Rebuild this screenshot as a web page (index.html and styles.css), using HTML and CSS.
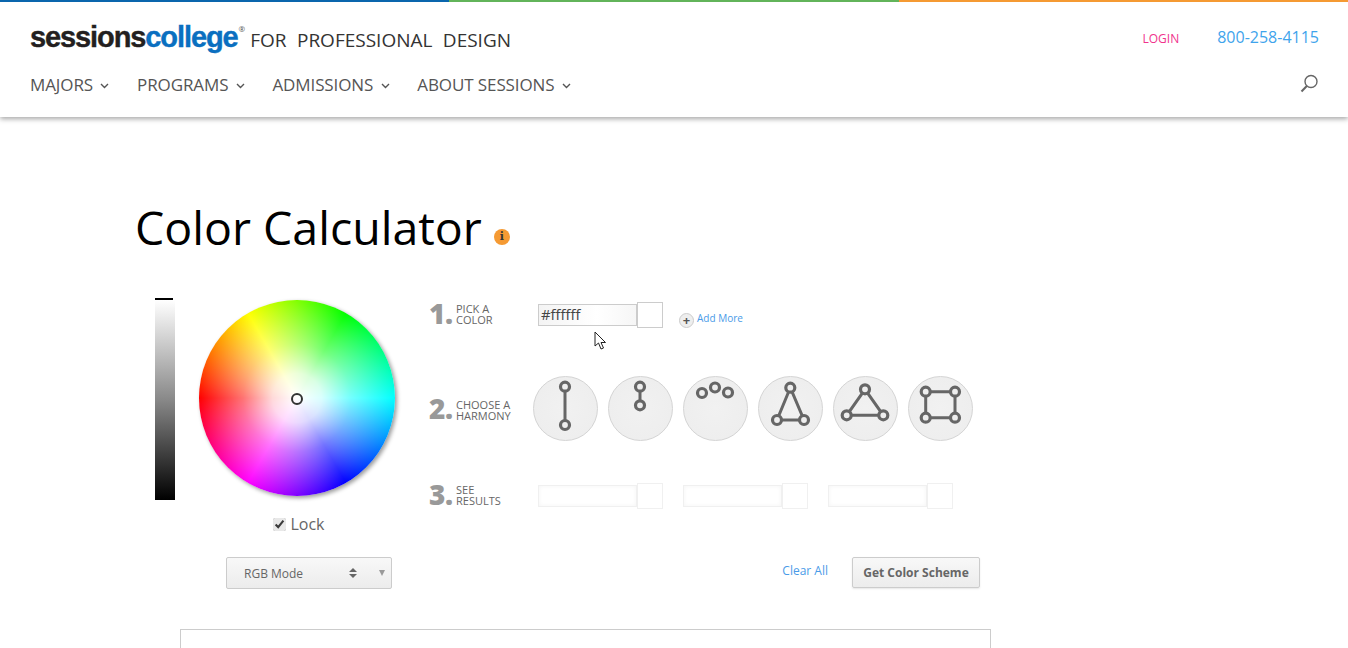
FILE: index.html
```html
<!DOCTYPE html>
<html lang="en">
<head>
    <meta charset="UTF-8">
    <title>Color Calculator - Sessions College</title>
    <link rel="stylesheet" href="styles.css">
</head>
<body>

<div class="stripe">
    <span class="stripe-blue"></span>
    <span class="stripe-green"></span>
    <span class="stripe-orange"></span>
</div>

<header class="header">
    <div class="header-top">
        <a class="logo" href="#">
            <span class="logo-dark">sessions</span><span class="logo-blue">college</span><sup class="logo-reg">®</sup>
            <span class="logo-tag">FOR PROFESSIONAL DESIGN</span>
        </a>
        <div class="contact">
            <a class="login" href="#">LOGIN</a>
            <a class="phone" href="#">800-258-4115</a>
        </div>
    </div>
    <div class="header-bottom">
        <nav class="nav">
            <a href="#">MAJORS <svg class="chev" viewBox="0 0 9 6"><path d="M1 1l3.5 3.5L8 1"/></svg></a>
            <a href="#">PROGRAMS <svg class="chev" viewBox="0 0 9 6"><path d="M1 1l3.5 3.5L8 1"/></svg></a>
            <a href="#">ADMISSIONS <svg class="chev" viewBox="0 0 9 6"><path d="M1 1l3.5 3.5L8 1"/></svg></a>
            <a href="#">ABOUT SESSIONS <svg class="chev" viewBox="0 0 9 6"><path d="M1 1l3.5 3.5L8 1"/></svg></a>
        </nav>
        <svg class="search" viewBox="0 0 20 20"><circle cx="12" cy="7.500" r="6"/><path class="search-handle" d="M7.800 12L2.500 17.500"/></svg>
    </div>
</header>

<main class="main">
    <h1 class="title">Color Calculator <span class="info">i</span></h1>

    <div class="calc">
        <!-- rueda y brillo -->
        <div class="picker">
            <div class="slider"><span class="slider-handle"></span></div>
            <div class="wheel-col">
                <div class="wheel"><span class="wheel-marker"></span></div>
                <label class="lock"><input type="checkbox" checked> Lock</label>
                <div class="mode">
                    <span>RGB Mode</span>
                    <span class="mode-updown"></span>
                    <span class="mode-arrow"></span>
                </div>
            </div>
        </div>

        <div class="steps">
            <div class="step step-pick">
                <div class="step-label"><b>1.</b><span>PICK A<br>COLOR</span></div>
                <div class="color-field">
                    <input class="color-input" type="text" value="#ffffff">
                    <span class="swatch"></span>
                </div>
                <a class="add-more" href="#"><span class="add-icon">+</span>Add More</a>
                <svg class="cursor" viewBox="0 0 14 20"><path d="M1 1v14l3.500-3 2.500 6 2.500-1-2.500-5.500h4.500z"/></svg>
            </div>

            <div class="step step-harmony">
                <div class="step-label"><b>2.</b><span>CHOOSE A<br>HARMONY</span></div>
                <div class="harmonies">
                    <button class="harmony"><svg viewBox="1 1 63 63"><path d="M32 10.700V49"/><circle cx="32" cy="10.700" r="4.500"/><circle cx="32" cy="49" r="4.500"/></svg></button>
                    <button class="harmony"><svg viewBox="1 1 63 63"><path d="M32 10.700V29.300"/><circle cx="32" cy="10.700" r="4.500"/><circle cx="32" cy="29.300" r="4.500"/></svg></button>
                    <button class="harmony"><svg viewBox="1 1 63 63"><circle cx="19" cy="17" r="4.500"/><circle cx="32" cy="11.500" r="4.500"/><circle cx="45" cy="16.500" r="4.500"/></svg></button>
                    <button class="harmony"><svg viewBox="1 1 63 63"><path d="M32.300 11.700L19 44H46z"/><circle cx="32.300" cy="11.700" r="4.500"/><circle cx="19" cy="44" r="4.500"/><circle cx="46" cy="44" r="4.500"/></svg></button>
                    <button class="harmony"><svg viewBox="1 1 63 63"><path d="M32 13.300L13.700 39.300H50.300z"/><circle cx="32" cy="13.300" r="4.500"/><circle cx="13.700" cy="39.300" r="4.500"/><circle cx="50.300" cy="39.300" r="4.500"/></svg></button>
                    <button class="harmony"><svg viewBox="1 1 63 63"><path d="M17.700 15.700H47V41.700H17.700z"/><circle cx="17.700" cy="15.700" r="4.500"/><circle cx="47" cy="15.700" r="4.500"/><circle cx="17.700" cy="41.700" r="4.500"/><circle cx="47" cy="41.700" r="4.500"/></svg></button>
                </div>
            </div>

            <div class="step step-results">
                <div class="step-label"><b>3.</b><span>SEE<br>RESULTS</span></div>
                <div class="results">
                    <div class="color-field is-empty"><span class="color-input"></span><span class="swatch"></span></div>
                    <div class="color-field is-empty"><span class="color-input"></span><span class="swatch"></span></div>
                    <div class="color-field is-empty"><span class="color-input"></span><span class="swatch"></span></div>
                </div>
            </div>

            <div class="actions">
                <a class="clear" href="#">Clear All</a>
                <button class="get-scheme">Get Color Scheme</button>
            </div>
        </div>
    </div>

    <div class="output"></div>
</main>

</body>
</html>
```

FILE: styles.css
```css
html {
    overflow: hidden;
    height: 100%;
}
body {
    margin: 0;
    height: 100%;
    overflow: hidden;
    background-color: #fff;
    font-family: "Open Sans", Arial, sans-serif;
    color: #555;
}
a {
    text-decoration: none;
}

/* franja de arriba */
.stripe {
    display: flex;
    height: 2px;
}
.stripe span {
    flex: 1;
}
.stripe-blue {
    background-color: #0a66ad;
}
.stripe-green {
    background-color: #62b45a;
}
.stripe-orange {
    background-color: #f59a33;
}

/* cabecera */
.header {
    height: 115px;
    padding: 0 29px 0 30px;
    box-shadow: 0 2px 5px rgba(0, 0, 0, 0.35);
    box-sizing: border-box;
}
.header-top {
    display: flex;
    justify-content: space-between;
    align-items: flex-start;
    height: 69px;
    padding-top: 20px;
    box-sizing: border-box;
}
.logo {
    display: flex;
    align-items: baseline;
    line-height: 30px;
    height: 30px;
}
.logo-dark,
.logo-blue {
    font-family: "Liberation Sans", Arial, sans-serif;
    font-weight: bold;
    font-size: 29px;
    letter-spacing: -1.100px;
    -webkit-text-stroke: 0.4px;
}
.logo-dark {
    color: #231f20;
}
.logo-blue {
    color: #0a6fc0;
}
.logo-reg {
    font-size: 8px;
    line-height: 8px;
    color: #555;
    align-self: flex-start;
    margin: 3px 0 0 1px;
}
.logo-tag {
    margin-top: -2px;
    margin-left: 5px;
    font-size: 19px;
    line-height: 28px;
    color: #333;
    word-spacing: 5.500px;
}
.contact {
    display: flex;
    align-items: baseline;
    gap: 38px;
    margin-top: 4px;
}
.login {
    font-size: 12px;
    color: #f0348c;
}
.phone {
    font-size: 16px;
    color: #3fa4ec;
}
.header-bottom {
    display: flex;
    justify-content: space-between;
    align-items: center;
    height: 26px;
}
.nav {
    display: flex;
    gap: 27.700px;
}
.nav a {
    font-size: 17px;
    color: #555;
    letter-spacing: -0.100px;
}
.chev {
    width: 9px;
    height: 6px;
    margin-left: 3px;
    vertical-align: 2px;
    fill: none;
    stroke: #555;
    stroke-width: 1.400;
}
.search {
    width: 20px;
    height: 20px;
    margin-top: -1px;
    fill: none;
    stroke: #666;
    stroke-width: 1.400;
}
.search-handle {
    stroke-width: 2;
}

/* calculadora */
.main {
    padding: 80px 0 0 135px;
}
.title {
    margin: 0 0 41px;
    height: 60px;
    font-size: 46.500px;
    line-height: 60px;
    font-weight: normal;
    color: #000;
}
.info {
    display: inline-block;
    width: 16px;
    height: 16px;
    margin-left: 0;
    border-radius: 50%;
    background-color: #f59a33;
    color: #333;
    font-family: "DejaVu Serif", serif;
    font-size: 11px;
    font-weight: bold;
    line-height: 16px;
    text-align: center;
    vertical-align: 5px;
}
.calc {
    display: flex;
    margin-left: 1px;
}
.picker {
    display: flex;
    width: 293px;
    padding-left: 19px;
    box-sizing: border-box;
}
.slider {
    position: relative;
    width: 20px;
    height: 200px;
    margin-top: 2px;
    background: linear-gradient(#fff, #888 50%, #000);
}
.slider-handle {
    position: absolute;
    top: -2px;
    left: 0;
    width: 18px;
    height: 2px;
    background-color: #000;
}
.wheel-col {
    margin-left: 24px;
    padding-top: 2px;
}
.wheel {
    position: relative;
    width: 196px;
    height: 196px;
    border-radius: 50%;
    background:
        radial-gradient(circle closest-side, #fff 0, rgba(255, 255, 255, 0.85) 25%, rgba(255, 255, 255, 0.45) 55%, rgba(255, 255, 255, 0) 100%),
        conic-gradient(#80ff00, #00ff00 30deg, #00ffff 90deg, #0000ff 150deg, #ff00ff 210deg, #ff0000 270deg, #ffff00 330deg, #80ff00);
    box-shadow: 2px 2px 4px rgba(0, 0, 0, 0.4);
}
.wheel-marker {
    position: absolute;
    top: 93px;
    left: 92px;
    width: 8px;
    height: 8px;
    border: 2px solid #333;
    border-radius: 50%;
}
.lock {
    display: flex;
    align-items: center;
    justify-content: center;
    gap: 4px;
    height: 20px;
    margin: 18px 0 0 4px;
    font-size: 16px;
    color: #666;
}
.lock input {
    width: 13px;
    height: 13px;
    margin: 0;
    accent-color: #e8e8e8;
}
.mode {
    display: flex;
    align-items: center;
    width: 166px;
    height: 32px;
    margin: 23px 0 0 27px;
    padding: 0 6px 0 17px;
    box-sizing: border-box;
    border: 1px solid #ccc;
    border-radius: 2px;
    background: linear-gradient(#f8f8f8, #ececec);
    font-size: 12px;
    color: #666;
}
.mode-updown {
    position: relative;
    width: 8px;
    height: 10px;
    margin-left: 46px;
}
.mode-updown::before,
.mode-updown::after {
    content: "";
    position: absolute;
    left: 0;
    border-left: 4px solid transparent;
    border-right: 4px solid transparent;
}
.mode-updown::before {
    top: 0;
    border-bottom: 4px solid #666;
}
.mode-updown::after {
    bottom: 0;
    border-top: 4px solid #666;
}
.mode-arrow {
    margin-left: auto;
    border-left: 3.500px solid transparent;
    border-right: 3.500px solid transparent;
    border-top: 6px solid #999;
}

.steps {
    display: flex;
    flex-direction: column;
    width: 551px;
    padding-top: 4px;
}
.step {
    display: flex;
    align-items: center;
    position: relative;
}
.step-label {
    display: flex;
    align-items: center;
    width: 109px;
    flex-shrink: 0;
}
.step-label b {
    width: 27px;
    margin-top: -4px;
    font-size: 28px;
    font-weight: 800;
    line-height: 28px;
    color: #999;
    letter-spacing: -0.500px;
}
.step-label span {
    margin-top: -2px;
    font-size: 11px;
    line-height: 11px;
    color: #666;
}
.step-harmony .step-label b {
    margin-top: -2px;
}
.step-harmony .step-label span {
    margin-top: 2px;
}
.color-field {
    display: flex;
    align-items: center;
}
.color-input {
    display: block;
    width: 99px;
    height: 22px;
    margin: 0;
    padding: 0 2px 2px;
    box-sizing: border-box;
    border: 1px solid #ccc;
    background: linear-gradient(90deg, #f4f4f4, #fff 60%, #f6f6f6);
    font-family: "Open Sans", Arial, sans-serif;
    font-size: 14.800px;
    color: #444;
    outline: none;
}
.swatch {
    width: 26px;
    height: 26px;
    box-sizing: border-box;
    border: 1px solid #ccc;
    background-color: #fff;
}
.is-empty .color-input {
    border-color: #f0f0f0;
    background: #fff;
    box-shadow: inset 0 0 4px #f4f4f4;
}
.is-empty .swatch {
    border-color: #f0f0f0;
}
.add-more {
    display: flex;
    align-items: center;
    gap: 3px;
    margin: 6px 0 0 16px;
    font-size: 10px;
    color: #4a9be8;
}
.add-icon {
    width: 13px;
    height: 13px;
    margin-top: 4px;
    border: 1px solid #ccc;
    border-radius: 50%;
    background-color: #eee;
    color: #555;
    font-size: 13px;
    font-weight: bold;
    line-height: 12px;
    text-align: center;
}
.cursor {
    position: absolute;
    top: 29px;
    left: 165px;
    width: 14px;
    height: 20px;
    fill: #fff;
    stroke: #222;
    stroke-width: 1;
}
.step-pick {
    height: 26px;
}
.step-harmony {
    height: 65px;
    margin-top: 48px;
}
.harmonies {
    display: flex;
    gap: 10px;
    margin-left: -5px;
}
.harmony {
    width: 65px;
    height: 65px;
    padding: 0;
    border: 1px solid #d4d4d4;
    border-radius: 50%;
    background: radial-gradient(circle, #f1f1f1, #eee 70%, #f4f4f4);
    box-sizing: border-box;
}
.harmony svg {
    display: block;
    width: 63px;
    height: 63px;
    fill: none;
    stroke: #666;
    stroke-width: 3;
}
.harmony circle {
    fill: #eee;
    stroke-width: 3.200;
}
.step-results {
    height: 26px;
    margin-top: 42px;
}
.results {
    display: flex;
    gap: 20px;
}
.actions {
    display: flex;
    justify-content: flex-end;
    align-items: center;
    gap: 24px;
    margin-top: 48px;
}
.clear {
    margin-top: -5px;
    font-size: 12px;
    color: #4a9be8;
}
.get-scheme {
    width: 128px;
    height: 31px;
    padding: 0;
    border: 1px solid #ccc;
    border-radius: 2px;
    background: linear-gradient(#f8f8f8, #ececec);
    box-shadow: 0 1px 2px rgba(0, 0, 0, 0.1);
    font-family: "Open Sans", Arial, sans-serif;
    font-size: 12px;
    font-weight: bold;
    color: #666;
}
.output {
    width: 811px;
    height: 200px;
    margin: 40px 0 0 45px;
    box-sizing: border-box;
    border: 1px solid #ccc;
}
```
